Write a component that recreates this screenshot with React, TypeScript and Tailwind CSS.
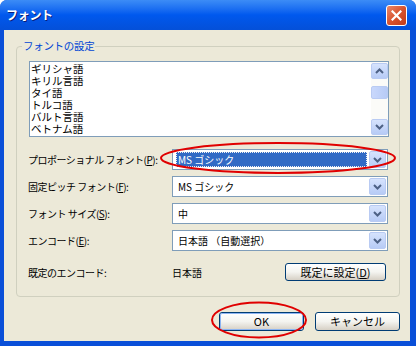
import React from "react";

const font = { fontFamily: '"Noto Sans CJK JP", "Noto Sans", sans-serif' };

function Chevron({ down = true }: { down?: boolean }) {
  return (
    <svg width="9" height="6" viewBox="0 0 9 6">
      {down ? (
        <path d="M1 1 L4.5 4.5 L8 1" fill="none" stroke="#4D6185" strokeWidth="2" />
      ) : (
        <path d="M1 5 L4.5 1.5 L8 5" fill="none" stroke="#4D6185" strokeWidth="2" />
      )}
    </svg>
  );
}

function ArrowBtn({ down = true, cls = "" }: { down?: boolean; cls?: string }) {
  return (
    <div
      className={
        "flex items-center justify-center rounded-[2px] border border-[#B9CBF3] bg-gradient-to-b from-[#D6E3FD] to-[#B7CBF6] " +
        cls
      }
    >
      <Chevron down={down} />
    </div>
  );
}

function Combo({ text, selected = false }: { text: string; selected?: boolean }) {
  return (
    <div className="flex h-[21px] w-[216px] items-stretch border border-[#7F9DB9] bg-white p-[1px]">
      <div className="flex flex-1 items-center pl-[2px] pr-[2px]">
        {selected ? (
          <div className="flex h-[15px] flex-1 items-center border border-dotted border-[#F0F0F0] bg-[#316AC5] pl-[1px] text-white">
            {text}
          </div>
        ) : (
          <div className="pl-[2px]">{text}</div>
        )}
      </div>
      <ArrowBtn cls="w-[17px]" />
    </div>
  );
}

function XPButton({ label, focused = false, cls = "" }: { label: React.ReactNode; focused?: boolean; cls?: string }) {
  return (
    <div
      className={
        "flex items-center justify-center rounded-[3px] border border-[#003C74] bg-gradient-to-b from-[#FFFFFF] via-[#F4F4F0] to-[#D6D0C5] text-[11px] " +
        cls
      }
    >
      <div
        className={
          "flex h-full w-full items-center justify-center rounded-[2px] border " +
          (focused ? "border-[#8CB4F2]" : "border-transparent")
        }
      >
        {label}
      </div>
    </div>
  );
}

export default function App() {
  const langs = ["ギリシャ語", "キリル言語", "タイ語", "トルコ語", "バルト言語", "ベトナム語"];
  return (
    <div className="relative h-[346px] w-[416px] overflow-hidden text-[10px] text-black" style={font}>
      <div className="flex h-full w-full flex-col rounded-t-[7px] bg-[#0A4FD8]">
        {/* title bar */}
        <div className="flex h-[30px] items-center justify-between rounded-t-[7px] bg-gradient-to-b from-[#3C8CF6] via-[#0058EE] to-[#0450D8] pl-[6px] pr-[9px]">
          <div className="text-[12px] font-bold tracking-[-0.3px] text-white" style={{ textShadow: "1px 1px 0 #0A1E7A" }}>
            フォント
          </div>
          <div className="flex h-[21px] w-[21px] items-center justify-center rounded-[3px] border border-white bg-gradient-to-br from-[#E8876A] via-[#D9532E] to-[#C33B18]">
            <svg width="11" height="11" viewBox="0 0 11 11">
              <path d="M1.5 1.5 L9.5 9.5 M9.5 1.5 L1.5 9.5" stroke="white" strokeWidth="2.2" strokeLinecap="square" />
            </svg>
          </div>
        </div>
        {/* frame + client */}
        <div className="flex flex-1 pb-[5px] pl-[4px] pr-[6px]">
          <div className="flex flex-1 flex-col bg-[#ECE9D8] pl-[12px] pt-[16px]">
            {/* group box */}
            <div className="relative w-[384px] rounded-[4px] border border-[#D0D0BF] pb-[15px] pl-[12px] pr-[10px] pt-[14px]">
              <div className="absolute left-[5px] top-[-9px] bg-[#ECE9D8] px-[1px] text-[10.5px] leading-[16px] tracking-[-0.3px] text-[#0046D5]">
                フォントの設定
              </div>
              {/* listbox */}
              <div className="flex h-[76px] w-[360px] border border-[#7F9DB9] bg-white">
                <div className="flex-1 pl-[1px] pt-[1px] text-[10.5px] leading-[12px]">
                  {langs.map((l) => (
                    <div key={l} className="h-[12px] overflow-visible">
                      {l}
                    </div>
                  ))}
                </div>
                <div className="flex w-[17px] flex-col justify-between bg-[#FBFBF8] py-[1px]">
                  <div className="flex flex-col gap-[7px]">
                    <ArrowBtn down={false} cls="h-[16px]" />
                    <div className="h-[13px] rounded-[2px] border border-[#B9CBF3] bg-gradient-to-r from-[#C9D8FC] to-[#B7CBF6]" />
                  </div>
                  <ArrowBtn cls="h-[16px]" />
                </div>
              </div>
              {/* rows */}
              <div className="mt-[12px] flex flex-col gap-[6px]">
                {[
                  ["プロポーショナル フォント(", "P", "):", "MS ゴシック", true],
                  ["固定ピッチ フォント(", "F", "):", "MS ゴシック", false],
                  ["フォント サイズ(", "S", "):", "中", false],
                  ["エンコード(", "E", "):", "日本語 （自動選択）", false],
                ].map(([a, k, b, v, sel]) => (
                  <div key={String(a)} className="flex items-center">
                    <div className="w-[144px] -ml-[1px] whitespace-nowrap tracking-[-0.5px]">
                      {a as string}
                      <span className="underline">{k as string}</span>
                      {b as string}
                    </div>
                    <Combo text={v as string} selected={sel as boolean} />
                  </div>
                ))}
              </div>
              <div className="mt-[12px] flex items-center">
                <div className="w-[144px] -ml-[1px] tracking-[-0.5px]">既定のエンコード:</div>
                <div className="flex-1">日本語</div>
                <XPButton
                  cls="mr-[3px] h-[18px] w-[101px]"
                  label={
                    <span>
                      既定に設定(<span className="underline">D</span>)
                    </span>
                  }
                />
              </div>
            </div>
            {/* buttons */}
            <div className="mt-[15px] flex w-[384px] justify-end gap-[11px]">
              <XPButton cls="h-[19px] w-[85px]" focused label="OK" />
              <XPButton cls="h-[19px] w-[85px]" label="キャンセル" />
            </div>
          </div>
        </div>
      </div>
      {/* red annotations */}
      <svg className="pointer-events-none absolute left-0 top-0" width="416" height="346">
        <ellipse cx="278" cy="158" rx="117" ry="15" fill="none" stroke="#E00000" strokeWidth="2" />
        <ellipse cx="259" cy="320" rx="47" ry="17.5" fill="none" stroke="#E00000" strokeWidth="2" />
      </svg>
    </div>
  );
}
